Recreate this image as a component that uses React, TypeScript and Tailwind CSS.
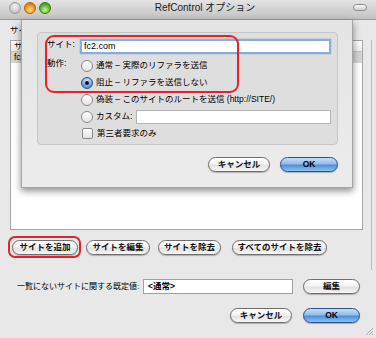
import React from "react";

const FONT = "font-['Liberation_Sans','Noto_Sans_CJK_JP',sans-serif]";

function AquaBtn({ w, label, primary }: { w: string; label: string; primary?: boolean }) {
  return (
    <div
      className={`${w} h-[15px] rounded-full flex items-center justify-center text-[8.5px] font-bold leading-none whitespace-nowrap shadow-[0_1px_1px_rgba(0,0,0,0.25)] ${
        primary
          ? "border border-[#2d4f85] bg-[linear-gradient(to_bottom,#c6def6_0%,#8fbdec_45%,#4f8fd8_55%,#8cc3f3_100%)] text-black"
          : "border border-[#6e6e6e] bg-[linear-gradient(to_bottom,#ffffff_0%,#f4f4f4_45%,#e2e2e2_55%,#f6f6f6_100%)] text-[#111]"
      }`}
    >
      {label}
    </div>
  );
}

function Radio({ on }: { on?: boolean }) {
  return on ? (
    <div className="w-[12px] h-[12px] rounded-full border border-[#2d4f85] bg-[radial-gradient(circle_at_50%_30%,#d6e8fa,#5b9be0_70%,#3f7fcf)] flex items-center justify-center shrink-0">
      <div className="w-[4px] h-[4px] rounded-full bg-[#111]" />
    </div>
  ) : (
    <div className="w-[12px] h-[12px] rounded-full border border-[#8a8a8a] bg-[linear-gradient(to_bottom,#ffffff,#e4e4e4)] shrink-0" />
  );
}

function Light({ cls }: { cls: string }) {
  return <div className={`w-[12px] h-[12px] rounded-full border ${cls}`} />;
}

export default function App() {
  return (
    <div className={`relative w-[376px] h-[338px] overflow-hidden bg-[#e8e8e8] text-black ${FONT}`}>
      {/* Title bar */}
      <div className="h-[20px] flex items-center border-b border-[#9a9a9a] bg-[linear-gradient(to_bottom,#e4e4e4,#c2c2c2)] relative">
        <div className="flex items-center gap-[3px] pl-[9px] -mt-[3px]">
          <Light cls="border-[#9a9a9a] bg-[radial-gradient(circle_at_50%_35%,#f2f2f2,#b4b4b4)]" />
          <Light cls="border-[#b8620a] bg-[radial-gradient(circle_at_50%_70%,#ffe08a,#f08a10_60%,#c85a00)]" />
          <Light cls="border-[#3a7a1a] bg-[radial-gradient(circle_at_50%_70%,#c8f8a0,#56b02a_60%,#2e8010)]" />
        </div>
        <div className="flex-1 text-center text-[10px] text-[#222] -mt-[4px] pl-[6px]">RefControl オプション</div>
        <div className="w-[14px] h-[7px] rounded-full border border-[#8a8a8a] bg-[linear-gradient(to_bottom,#fafafa,#cfcfcf)] mr-[9px] -mt-[5px]" />
      </div>

      {/* Main window content */}
      <div className="flex flex-col">
        <div className="h-[14px] mt-[3px] pl-[10px] text-[8.5px] leading-[14px]">サイト:</div>
        <div className="mt-[3px] ml-[10px] w-[353px] h-[190px] bg-white border border-[#a6a6a6] flex flex-col">
          <div className="h-[11px] border-b border-[#c4c4c4] bg-[linear-gradient(to_bottom,#ffffff,#ececec)] text-[8.5px] leading-[11px] pl-[3px]">サイト</div>
          <div className="h-[11px] bg-[#d4d4d4] text-[8.5px] leading-[11px] pl-[3px]">fc2.com</div>
        </div>
        <div className="mt-[10px] flex items-center pl-[12px]">
          <AquaBtn w="w-[66px]" label="サイトを追加" />
          <div className="ml-[8px]"><AquaBtn w="w-[64px]" label="サイトを編集" /></div>
          <div className="ml-[8px]"><AquaBtn w="w-[63px]" label="サイトを除去" /></div>
          <div className="ml-[11px]"><AquaBtn w="w-[95px]" label="すべてのサイトを除去" /></div>
        </div>
        <div className="mt-[24px] flex items-center h-[15px] pl-[17px]">
          <div className="w-[126px] text-[8px] whitespace-nowrap">一覧にないサイトに関する既定値:</div>
          <div className="w-[150px] h-[15px] bg-white border border-[#a0a0a0] text-[8.5px] leading-[13px] pl-[4px] font-bold">&lt;通常&gt;</div>
          <div className="ml-[10px]"><AquaBtn w="w-[57px]" label="編集" /></div>
        </div>
        <div className="mt-[14px] flex items-center justify-end pr-[16px] gap-[11px]">
          <AquaBtn w="w-[62px]" label="キャンセル" />
          <AquaBtn w="w-[57px]" label="OK" primary />
        </div>
      </div>

      {/* faint right edge */}
      <div className="absolute left-[371px] top-[40px] w-px h-[230px] bg-[#bdbdbd]" />

      {/* resize grip */}
      <svg className="absolute right-[2px] bottom-[2px]" width="10" height="10" viewBox="0 0 10 10">
        <line x1="9" y1="2" x2="2" y2="9" stroke="#9a9a9a" strokeWidth="0.8" />
        <line x1="9" y1="5" x2="5" y2="9" stroke="#9a9a9a" strokeWidth="0.8" />
        <line x1="9" y1="8" x2="8" y2="9" stroke="#9a9a9a" strokeWidth="0.8" />
      </svg>

      {/* Sheet */}
      <div className="absolute left-[21px] top-[20px] w-[332px] h-[168px] bg-[linear-gradient(to_bottom,#e4e4e4,#ececec)] border-x border-b border-[#a4a4a4] shadow-[0_3px_7px_rgba(0,0,0,0.45)] pt-[12px] pl-[15px] flex flex-col">
        <div className="w-[301px] h-[113px] rounded-[4px] border border-[#c6c6c6] bg-[#dedede] flex flex-col">
          <div className="mt-[6px] flex items-center h-[15px]">
            <div className="w-[42px] pl-[9px] text-[8.5px] -mt-[4px]">サイト:</div>
            <div className="w-[251px] h-[15px] bg-white border-2 border-[#88acdc] shadow-[0_0_1px_#5f8fd0] text-[9px] leading-[11px] pl-[2px]">fc2.com</div>
          </div>
          <div className="mt-[3px] flex">
            <div className="w-[43px] pl-[9px] text-[8.5px] leading-[17px] -mt-[2px]">動作:</div>
            <div className="flex flex-col">
              <div className="h-[17px] flex items-center gap-[3px] text-[8.5px]"><Radio />通常 – 実際のリファラを送信</div>
              <div className="h-[17px] flex items-center gap-[3px] text-[8.5px]"><Radio on />阻止 – リファラを送信しない</div>
              <div className="h-[17px] flex items-center gap-[3px] text-[8.5px]"><Radio />偽装 – このサイトのルートを送信 (http://SITE/)</div>
              <div className="h-[17px] flex items-center gap-[3px] text-[8.5px] w-[250px]">
                <Radio />カスタム:
                <div className="ml-auto w-[195px] h-[14px] bg-white border border-[#b4b4b4]" />
              </div>
              <div className="h-[17px] flex items-center gap-[4px] text-[8.5px] pl-[1px]">
                <div className="w-[11px] h-[11px] rounded-[2px] border border-[#8a8a8a] bg-[linear-gradient(to_bottom,#ffffff,#e2e2e2)]" />
                第三者要求のみ
              </div>
            </div>
          </div>
        </div>
        <div className="mt-[12px] flex justify-end pr-[16px] gap-[10px] w-[317px]">
          <AquaBtn w="w-[62px]" label="キャンセル" />
          <AquaBtn w="w-[58px]" label="OK" primary />
        </div>
      </div>

      {/* red annotations */}
      <div className="absolute left-[45px] top-[35px] w-[194px] h-[58px] rounded-[9px] border-2 border-[#e8202a]" />
      <div className="absolute left-[8px] top-[236px] w-[73px] h-[22px] rounded-[7px] border-2 border-[#e8202a]" />
    </div>
  );
}
